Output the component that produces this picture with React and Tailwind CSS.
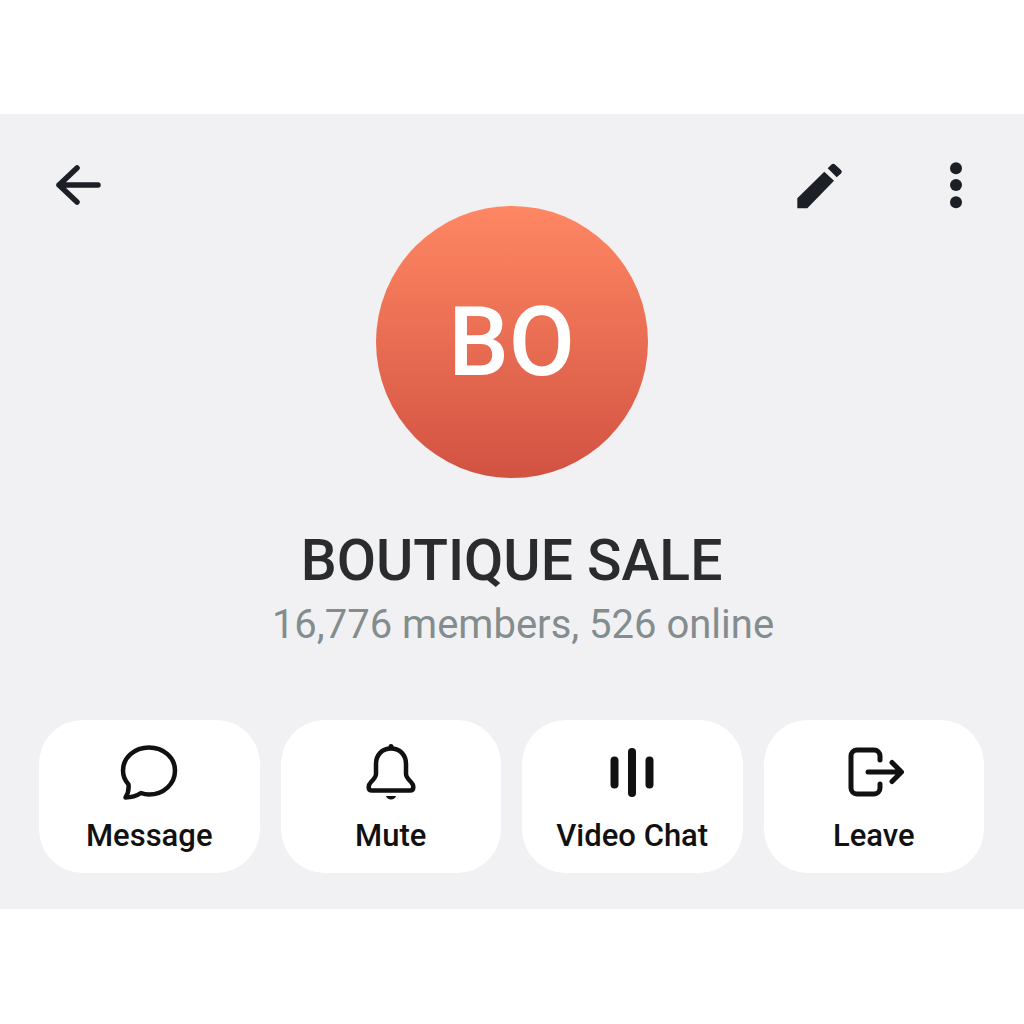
import React from "react";

const actions = [
  {
    label: "Message",
    icon: (
      <path
        d="M11.5 44.5C8 40.5 6 36 6 30.5C6 17.5 17.5 7.5 32 7.5C46.5 7.5 58 17.5 58 30.5C58 44 46.5 54.5 32 54.5C29 54.5 26.5 54 24 53C19.5 56 14 57.5 8.5 57.5C11 54 12 49.5 11.5 44.5Z"
        fill="none"
        stroke="currentColor"
        strokeWidth="4.5"
        strokeLinejoin="round"
      />
    ),
  },
  {
    label: "Mute",
    icon: (
      <>
        <path
          d="M32 8.5C23 8.5 17 15 17 24V34C17 37 15 39 12 42C9 45 8.5 50.5 13 50.5H51C55.5 50.5 55 45 52 42C49 39 47 37 47 34V24C47 15 41 8.5 32 8.5Z"
          fill="none"
          stroke="currentColor"
          strokeWidth="4.5"
          strokeLinejoin="round"
        />
        <circle cx="32" cy="6.5" r="2.5" fill="currentColor" />
        <path d="M27 56H37C36 60.5 28 60.5 27 56Z" fill="currentColor" />
      </>
    ),
  },
  {
    label: "Video Chat",
    icon: (
      <>
        <rect x="10.5" y="16.5" width="8" height="32" rx="4" fill="currentColor" />
        <rect x="28" y="8" width="8" height="49" rx="4" fill="currentColor" />
        <rect x="45.5" y="16.5" width="8" height="32" rx="4" fill="currentColor" />
      </>
    ),
  },
  {
    label: "Leave",
    icon: (
      <g fill="none" stroke="currentColor" strokeWidth="5" strokeLinecap="round" strokeLinejoin="round">
        <path d="M38 20V16A6 6 0 0 0 32 10H15A6 6 0 0 0 9 16V48A6 6 0 0 0 15 54H32A6 6 0 0 0 38 48V44" />
        <path d="M26 32H59M50 22.5L59.5 32L50 41.5" />
      </g>
    ),
  },
];

const App = () => {
  return (
    <div className="min-h-screen bg-white pt-[114px] font-['Roboto',sans-serif]">
      <div className="bg-[#f1f1f4] pt-[46px] pb-[36px] px-[39px] pr-[40px]">
        {/* Top bar */}
        <div className="flex items-center justify-between -mb-1 pl-[11px] pr-[21px] text-[#1c1f26]">
          <svg width="56" height="50" viewBox="0 0 56 50" fill="none" stroke="currentColor" strokeWidth="5.5" strokeLinecap="round" strokeLinejoin="round">
            <path d="M9 25H48M27 8L9 25L27 42" />
          </svg>
          <div className="flex items-center gap-[104px]">
            <svg width="50" height="50" viewBox="0 0 50 50" fill="currentColor">
              <path d="M2.3 48.3V38.3L29.3 11.7L39 20.7L12.3 48.3Z" />
              <path d="M32.7 8.3L36.5 4.5Q38.3 2.8 40 4.5L46 10Q47.8 11.7 46 13.5L41.7 17.3Z" />
            </svg>
            <svg width="14" height="50" viewBox="0 0 14 50" fill="currentColor">
              <circle cx="7" cy="8.3" r="6" />
              <circle cx="7" cy="25" r="6" />
              <circle cx="7" cy="42.3" r="6" />
            </svg>
          </div>
        </div>

        {/* Avatar */}
        <div className="flex justify-center">
          <div className="flex h-[272px] w-[272px] items-center justify-center rounded-full bg-gradient-to-b from-[#ff8763] to-[#d25242]">
            <span className="text-[96px] font-medium leading-none text-white">BO</span>
          </div>
        </div>

        {/* Title */}
        <p className="mt-[53px] text-center text-[57px] font-medium leading-[60px] text-[#2a2b2d]">BOUTIQUE SALE</p>
        <p className="mt-[12px] pl-[23px] text-center text-[40px] leading-[44px] text-[#848d8e]">16,776 members, 526 online</p>

        {/* Actions */}
        <div className="mt-[73px] grid grid-cols-4 gap-[21px]">
          {actions.map((item) => (
            <div key={item.label} className="flex h-[153px] flex-col items-center rounded-[44px] bg-white pt-[20px] text-[#111]">
              <svg width="64" height="64" viewBox="0 0 64 64">
                {item.icon}
              </svg>
              <span className="mt-[15px] text-[31px] font-medium leading-[34px]">{item.label}</span>
            </div>
          ))}
        </div>
      </div>
    </div>
  );
};

export default App;
